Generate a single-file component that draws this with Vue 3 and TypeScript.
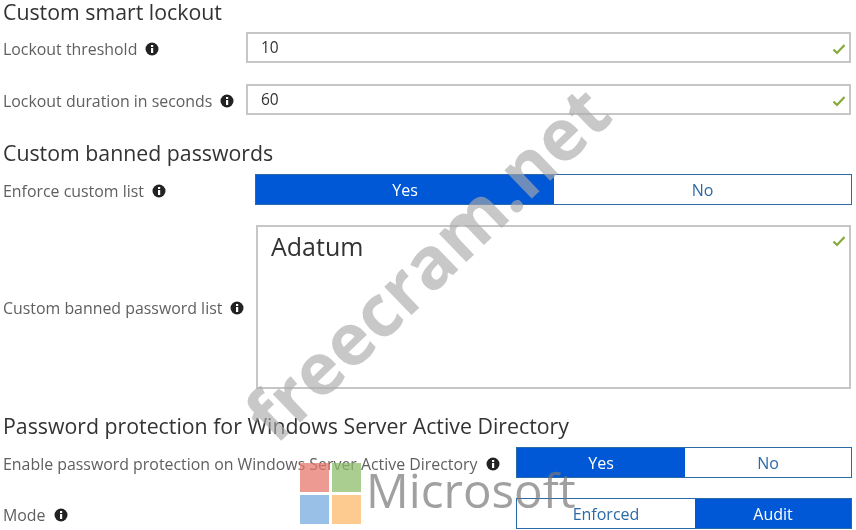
<script setup lang="ts">
const lockoutRows = [
  { label: 'Lockout threshold', value: '10' },
  { label: 'Lockout duration in seconds', value: '60' },
]
</script>

<template>
  <div class="page">
    <h2 class="first">Custom smart lockout</h2>
    <div v-for="row in lockoutRows" :key="row.label" class="row input-row">
      <div class="label label-input">
        {{ row.label }}
        <svg class="info" viewBox="0 0 14 14"><circle cx="7" cy="7" r="6.5" fill="#222" /><rect x="6" y="6" width="2.2" height="5" fill="#fff" /><rect x="6" y="3" width="2.2" height="2" fill="#fff" /></svg>
      </div>
      <div class="field">
        {{ row.value }}
        <svg class="check" viewBox="0 0 14 12"><path d="M1.5 6.5 5 10 12.5 2" fill="none" stroke="#86a93a" stroke-width="2.2" /></svg>
      </div>
    </div>

    <h2 class="second">Custom banned passwords</h2>
    <div class="row toggle-row">
      <div class="label label-wide">
        Enforce custom list
        <svg class="info" viewBox="0 0 14 14"><circle cx="7" cy="7" r="6.5" fill="#222" /><rect x="6" y="6" width="2.2" height="5" fill="#fff" /><rect x="6" y="3" width="2.2" height="2" fill="#fff" /></svg>
      </div>
      <div class="toggle toggle-big">
        <div class="opt on yes-big">Yes</div>
        <div class="opt">No</div>
      </div>
    </div>
    <div class="row area-row">
      <div class="label label-wide">
        Custom banned password list
        <svg class="info" viewBox="0 0 14 14"><circle cx="7" cy="7" r="6.5" fill="#222" /><rect x="6" y="6" width="2.2" height="5" fill="#fff" /><rect x="6" y="3" width="2.2" height="2" fill="#fff" /></svg>
      </div>
      <div class="area">
        Adatum
        <svg class="check check-area" viewBox="0 0 14 12"><path d="M1.5 6.5 5 10 12.5 2" fill="none" stroke="#86a93a" stroke-width="2.2" /></svg>
      </div>
    </div>

    <h2 class="third">Password protection for Windows Server Active Directory</h2>
    <div class="row ad-row">
      <div class="label label-long">
        Enable password protection on Windows Server Active Directory
        <svg class="info" viewBox="0 0 14 14"><circle cx="7" cy="7" r="6.5" fill="#222" /><rect x="6" y="6" width="2.2" height="5" fill="#fff" /><rect x="6" y="3" width="2.2" height="2" fill="#fff" /></svg>
      </div>
      <div class="toggle toggle-small">
        <div class="opt on yes-small">Yes</div>
        <div class="opt">No</div>
      </div>
    </div>
    <div class="row mode-row">
      <div class="label label-long">
        Mode
        <svg class="info" viewBox="0 0 14 14"><circle cx="7" cy="7" r="6.5" fill="#222" /><rect x="6" y="6" width="2.2" height="5" fill="#fff" /><rect x="6" y="3" width="2.2" height="2" fill="#fff" /></svg>
      </div>
      <div class="toggle toggle-small">
        <div class="opt enforced">Enforced</div>
        <div class="opt on">Audit</div>
      </div>
    </div>

    <!-- stamped over the screenshot -->
    <div class="watermark">freecram.net</div>
    <div class="ms">
      <div class="ms-grid">
        <span class="red"></span><span class="green"></span>
        <span class="blue"></span><span class="orange"></span>
      </div>
      <span class="ms-text">Microsoft</span>
    </div>
  </div>
</template>

<style>
html, body {
  margin: 0;
  background: #fff;
  overflow: hidden;
}
</style>

<style scoped>
.page {
  position: relative;
  width: 856px;
  height: 530px;
  overflow: hidden;
  box-sizing: border-box;
  padding: 0 0 0 3px;
  font-family: "Open Sans", "Noto Sans", sans-serif;
  color: #5f5f5f;
  filter: blur(0.45px);
}

h2 {
  margin: 0;
  font-size: 21.3px;
  line-height: 24px;
  font-weight: 400;
  color: #333;
  white-space: nowrap;
}

.second { margin-top: 26px; }
.third { margin-top: 25px; }

.row {
  display: flex;
  align-items: center;
}

.input-row {
  height: 31px;
  margin-top: 8px;
}
.input-row + .input-row { margin-top: 21px; }

.label {
  flex: none;
  font-size: 15.9px;
  white-space: nowrap;
  display: flex;
  align-items: center;
  gap: 8px;
  padding-top: 2px;
  box-sizing: border-box;
}
.label-input { width: 243px; }
.label-wide { width: 252px; }
.label-long { width: 513px; }

.info {
  width: 14px;
  height: 14px;
  flex: none;
}

.field {
  position: relative;
  width: 605px;
  height: 31px;
  box-sizing: border-box;
  border: 2px solid #c6c6c6;
  padding-left: 13px;
  font-size: 15.5px;
  line-height: 27px;
  color: #333;
}

.check {
  position: absolute;
  right: 3px;
  top: 9px;
  width: 14px;
  height: 12px;
}

.toggle {
  display: flex;
  height: 31px;
  box-sizing: border-box;
  border: 1.5px solid #2a6aa8;
  font-size: 16px;
  color: #2a6aa8;
}
.toggle-big { width: 597px; }
.toggle-small { width: 336px; }
.toggle-row { margin-top: 9px; }

.opt {
  flex: 1;
  display: flex;
  align-items: center;
  justify-content: center;
}
.on {
  background: #0058d6;
  color: #fff;
}
.yes-big { flex: none; width: 298px; }
.yes-small { flex: none; width: 168px; }
.enforced { flex: none; width: 178px; }

.area-row { margin-top: 20px; }

.area {
  position: relative;
  width: 595px;
  height: 164px;
  margin-left: 1px;
  box-sizing: border-box;
  border: 2px solid #c6c6c6;
  padding: 1px 0 0 13px;
  font-size: 25px;
  line-height: 36px;
  color: #333;
}
.check-area { top: 8px; }

.ad-row { margin-top: 9px; }
.mode-row { margin-top: 20px; }

.watermark {
  position: absolute;
  left: 426px;
  top: 262px;
  transform: translate(-50%, -50%) rotate(-44deg);
  font-size: 72px;
  font-weight: 700;
  line-height: 1;
  white-space: nowrap;
  color: rgba(170, 170, 170, 0.65);
}

.ms {
  position: absolute;
  left: 300px;
  top: 463px;
  display: flex;
  align-items: center;
  gap: 5px;
}
.ms-grid {
  display: grid;
  grid-template-columns: 29px 29px;
  grid-auto-rows: 29px;
  gap: 3px;
}
.red { background: rgba(230, 120, 110, 0.75); }
.green { background: rgba(140, 190, 105, 0.75); }
.blue { background: rgba(110, 165, 220, 0.7); }
.orange { background: rgba(252, 185, 105, 0.75); }
.ms-text {
  font-size: 47.5px;
  line-height: 1;
  margin-bottom: 8px;
  color: rgba(120, 120, 120, 0.7);
}
</style>
